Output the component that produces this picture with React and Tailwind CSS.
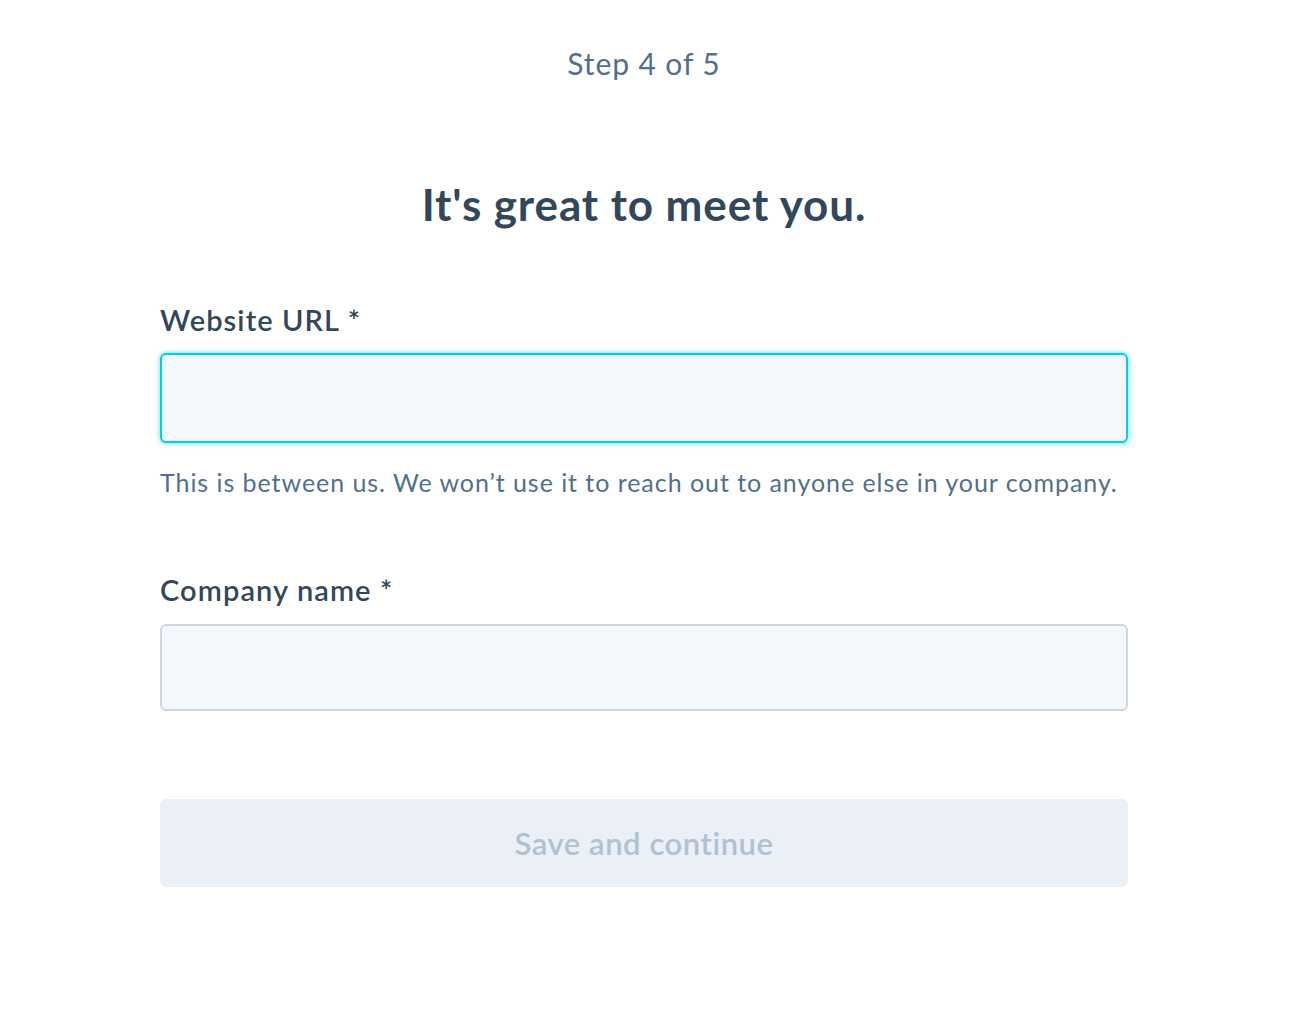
export default function App() {
  return (
    <div className="w-[1288px] min-h-[1016px] bg-white px-[160px] font-['Lato','Liberation_Sans',sans-serif] text-[#33475b]">
      <div className="pt-[41px] text-center text-[30px] leading-[44px] tracking-[0.9px] text-[#516f90]">Step 4 of 5</div>

      <h1 className="mt-[91px] text-center text-[44px] font-bold leading-[56px] tracking-[0.9px] text-[#33475b]">It's great to meet you.</h1>

      <div className="mt-[70px]">
        <label className="block text-[29px] font-semibold leading-[36px] tracking-[1.1px] text-[#33475b]">Website URL *</label>
        <input
          className="mt-[15px] block h-[90px] w-full rounded-[6px] border-2 border-[#00d2e6] bg-[#f5f8fa] px-4 shadow-[0_0_4px_1px_rgba(0,208,228,0.5)] outline-none"
          type="text"
        />
        <p className="mt-[21px] text-[25px] leading-[36px] tracking-[0.95px] text-[#516f90]">
          This is between us. We won’t use it to reach out to anyone else in your company.
        </p>
      </div>

      <div className="mt-[72px]">
        <label className="block text-[29px] font-semibold leading-[36px] tracking-[1.1px] text-[#33475b]">Company name *</label>
        <input
          className="mt-[16px] block h-[87px] w-full rounded-[6px] border-2 border-[#cbd6e2] bg-[#f5f8fa] px-4 outline-none"
          type="text"
        />
      </div>

      <button className="mt-[88px] flex h-[88px] w-full items-center justify-center rounded-[6px] bg-[#eaf0f6] text-[31px] font-semibold tracking-[0.55px] text-[#b0c1d4]">
        Save and continue
      </button>
    </div>
  );
}
